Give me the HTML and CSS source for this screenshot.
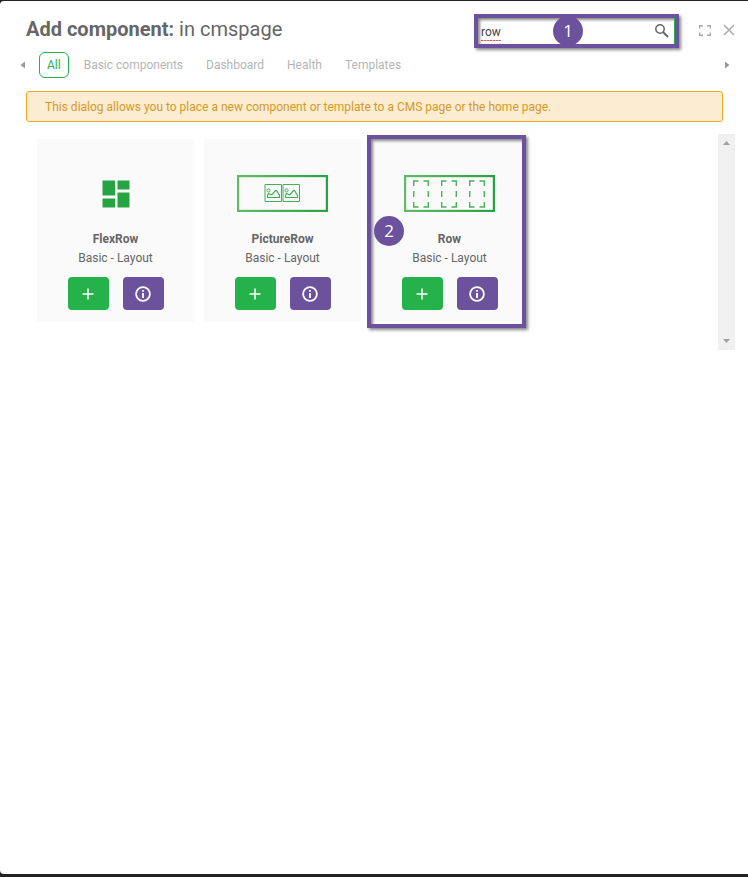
FILE: index.html
```
<!DOCTYPE html>
<html lang="en">
<head>
<meta charset="utf-8">
<meta name="viewport" content="width=device-width, initial-scale=1">
<title>Add component</title>
<link rel="stylesheet" href="styles.css">
</head>
<body>
<svg class="defs" aria-hidden="true">
  <defs>
    <linearGradient id="frame" gradientUnits="userSpaceOnUse" x1="0" y1="0" x2="91" y2="0">
      <stop offset="0" stop-color="#62ba6b"/><stop offset="1" stop-color="#26a343"/>
    </linearGradient>
    <symbol id="plus" viewBox="0 0 12 12"><path d="M6 0.5V11.5M0.5 6H11.5" stroke="#fff" stroke-width="1.5"/></symbol>
    <symbol id="info" viewBox="0 0 16 16"><circle cx="8" cy="8" r="6.9" fill="none" stroke="#fff" stroke-width="1.8"/><path d="M8 4V5.7M8 7V12" stroke="#fff" stroke-width="1.8"/></symbol>
    <symbol id="picture" viewBox="0 0 18 18"><path d="M1 0.500H17.500V17.500H1Z" fill="none" stroke="#45ae59"/><path d="M4.500 9.500C6 9.500 6.500 11.500 8 10.500L11.500 6.500C13.500 6 13.500 9.500 15.500 11V13.500H3.500V11.500Z" fill="none" stroke="#45ae59" stroke-width="1.200"/><circle cx="4.500" cy="6.500" r="1.600" fill="none" stroke="#45ae59"/></symbol>
    <symbol id="slot" viewBox="0 0 16 28"><path d="M0.700 6V1H5.500M10.500 1H15.300V6M0.700 11V17M15.300 11V17M0.700 22V27H5.500M10.500 27H15.300V22" fill="none" stroke="#4db15e" stroke-width="1.400"/></symbol>
  </defs>
</svg>
<main class="dialog">
  <header class="header">
    <h1 class="title"><b>Add component:</b> in cmspage</h1>
    <div class="search highlight">
      <input class="search-input" type="text" value="row" aria-label="Search components">
      <button class="search-button" type="button" aria-label="Search"><svg width="14" height="14" viewBox="0 0 14 14" fill="none" stroke="#666"><circle cx="5" cy="5" r="4.200" stroke-width="1.500"/><path d="M8 8L13 13" stroke-width="2"/></svg></button>
      <span class="marker marker-search">1</span>
    </div>
    <button class="icon-button" type="button" aria-label="Full screen"><svg width="12" height="11" viewBox="0 0 12 11" fill="none" stroke="#aaa" stroke-width="1.400"><path d="M0.700 3.500V0.700H4M8 0.700H11.300V3.500M0.700 7.500V10.300H4M8 10.300H11.300V7.500"/></svg></button>
    <button class="icon-button" type="button" aria-label="Close"><svg width="12" height="12" viewBox="0 0 12 12" stroke="#aaa" stroke-width="1.500"><path d="M1 1L11 11M11 1L1 11"/></svg></button>
  </header>
  <nav class="tabs" aria-label="Categories">
    <button class="arrow" type="button" aria-label="Previous"><svg width="5" height="8" viewBox="0 0 5 8"><path d="M5 0.500V7.500L0.500 4Z" fill="#999"/></svg></button>
    <button class="tab active" type="button">All</button>
    <button class="tab" type="button">Basic components</button>
    <button class="tab" type="button">Dashboard</button>
    <button class="tab" type="button">Health</button>
    <button class="tab" type="button">Templates</button>
    <button class="arrow next" type="button" aria-label="Next"><svg width="5" height="8" viewBox="0 0 5 8"><path d="M0 0.500V7.500L4.500 4Z" fill="#999"/></svg></button>
  </nav>
  <p class="notice">This dialog allows you to place a new component or template to a CMS page or the home page.</p>
  <section class="results">
    <div class="cards">
      <article class="card">
        <div class="preview"><svg width="28" height="28" viewBox="0 0 28 28" fill="#26a343"><path d="M0.500 0.500h12.500v15H0.500zM15.500 0.500H27.500V9.500H15.500zM0.500 18.500h12.500v9H0.500zM15.500 12.500H27.500v15H15.500z"/></svg></div>
        <h2 class="name">FlexRow</h2>
        <p class="group">Basic - Layout</p>
        <div class="actions"><button class="action add" type="button" aria-label="Add FlexRow"><svg width="12" height="12"><use href="#plus"/></svg></button><button class="action about" type="button" aria-label="About FlexRow"><svg width="16" height="16"><use href="#info"/></svg></button></div>
      </article>
      <article class="card">
        <div class="preview"><svg width="91" height="37" viewBox="0 0 91 37"><rect x="1" y="1" width="89" height="35" fill="none" stroke="url(#frame)" stroke-width="2.400"/><use href="#picture" x="27" y="9" width="18" height="18"/><use href="#picture" x="45" y="9" width="18" height="18"/></svg></div>
        <h2 class="name">PictureRow</h2>
        <p class="group">Basic - Layout</p>
        <div class="actions"><button class="action add" type="button" aria-label="Add PictureRow"><svg width="12" height="12"><use href="#plus"/></svg></button><button class="action about" type="button" aria-label="About PictureRow"><svg width="16" height="16"><use href="#info"/></svg></button></div>
      </article>
      <article class="card">
        <div class="preview"><svg width="91" height="37" viewBox="0 0 91 37"><rect x="1" y="1" width="89" height="35" fill="none" stroke="url(#frame)" stroke-width="2.400"/><use href="#slot" x="9" y="5" width="16" height="28"/><use href="#slot" x="37" y="5" width="16" height="28"/><use href="#slot" x="65" y="5" width="16" height="28"/></svg></div>
        <h2 class="name">Row</h2>
        <p class="group">Basic - Layout</p>
        <div class="actions"><button class="action add" type="button" aria-label="Add Row"><svg width="12" height="12"><use href="#plus"/></svg></button><button class="action about" type="button" aria-label="About Row"><svg width="16" height="16"><use href="#info"/></svg></button></div>
        <div class="highlight card-highlight"></div>
        <span class="marker marker-card">2</span>
      </article>
    </div>
    <div class="scrollbar" aria-hidden="true">
      <svg width="7" height="4" viewBox="0 0 7 4"><path d="M0 4L3.500 0L7 4Z" fill="#a0a0a0"/></svg>
      <svg width="7" height="4" viewBox="0 0 7 4"><path d="M0 0L3.500 4L7 0Z" fill="#a0a0a0"/></svg>
    </div>
  </section>
</main>
</body>
</html>
```
FILE: styles.css
```
* { box-sizing: border-box; }

body {
  margin: 0;
  min-height: 100vh;
  display: flex;
  padding: 1px 0 3px;
  background: #222124;
  color: #666;
  font: 12px/16px Roboto, "Liberation Sans", sans-serif;
}

h1, h2, p { margin: 0; }

button, input { font: inherit; }

button {
  display: flex;
  align-items: center;
  justify-content: center;
  padding: 0;
  border: 0;
  background: none;
}

svg { display: block; }

.defs { position: absolute; width: 0; height: 0; }

.dialog {
  flex: 1;
  min-width: 0;
  padding: 13px 13px 0 20px;
  border-radius: 4px 0 0 4px;
  background: #fff;
}

.header {
  display: flex;
  align-items: center;
  gap: 12px;
  padding-left: 6px;
}

.title {
  flex: 1;
  padding-bottom: 4px;
  font-size: 20px;
  line-height: 28px;
  font-weight: 400;
}

.highlight {
  border: 4px solid #6c529d;
  box-shadow: 2px 2px 3px #888, inset 2px 2px 3px #888;
}

.search {
  position: relative;
  display: flex;
  align-items: center;
  width: 205px;
  height: 34px;
  margin-right: 8px;
}

.search::after {
  content: "";
  align-self: stretch;
  width: 1px;
  background: #25b24b;
}

.search-input {
  flex: 1;
  min-width: 0;
  padding: 2px 3px 1px;
  border: 0;
  outline: 0;
  background: repeating-linear-gradient(90deg, #e55 0 2px, #f5b5b5 2px 3px) 3px 100% / 20px 1px no-repeat;
  color: #444;
}

.search-button { margin-right: 5px; }

.icon-button { margin-bottom: 2px; }

.marker {
  position: absolute;
  width: 30px;
  height: 30px;
  border-radius: 50%;
  background: #6c529d;
  color: #fff;
  font: 17px/30px "Open Sans", sans-serif;
  text-align: center;
}

.marker-search { left: 75px; top: -2px; }

.tabs {
  display: flex;
  align-items: center;
  gap: 7px;
  margin-top: 4px;
}

.arrow { width: 5px; height: 16px; margin-right: 7px; }

.arrow.next { margin: 0 5px 0 auto; }

.tab {
  height: 26px;
  padding: 0 7px;
  border: 1px solid transparent;
  border-radius: 6px;
  color: #b5b5b5;
}

.tab.active { border-color: #25b24b; color: #25b24b; }

.notice {
  margin: 13px 12px 0 6px;
  padding: 7px 18px 6px;
  border: 1px solid #eeaa20;
  border-radius: 3px;
  background: #fcecd2;
  color: #d69a26;
}

.results {
  display: flex;
  justify-content: space-between;
  margin-top: 12px;
}

.cards {
  display: flex;
  flex-wrap: wrap;
  align-items: flex-start;
  gap: 10px;
  padding: 5px 0 28px 17px;
}

.card {
  position: relative;
  width: 157px;
  padding: 36px 0 12px;
  background: #fafafa;
  text-align: center;
}

.preview {
  display: flex;
  align-items: center;
  justify-content: center;
  height: 37px;
}

.name {
  margin-top: 19px;
  font-size: 12px;
  line-height: 16px;
}

.group { margin-top: 3px; }

.actions {
  display: flex;
  justify-content: center;
  gap: 14px;
  margin-top: 11px;
}

.action { width: 41px; height: 33px; border-radius: 4px; }

.add { background: #25b24b; }

.about { background: #6c529d; }

.card-highlight { position: absolute; inset: -4px 2px -6px -4px; }

.marker-card { left: 3px; top: 77px; }

.scrollbar {
  display: flex;
  flex-direction: column;
  align-items: center;
  justify-content: space-between;
  width: 17px;
  padding: 7px 0;
  background: #f0f0f0;
}
```
